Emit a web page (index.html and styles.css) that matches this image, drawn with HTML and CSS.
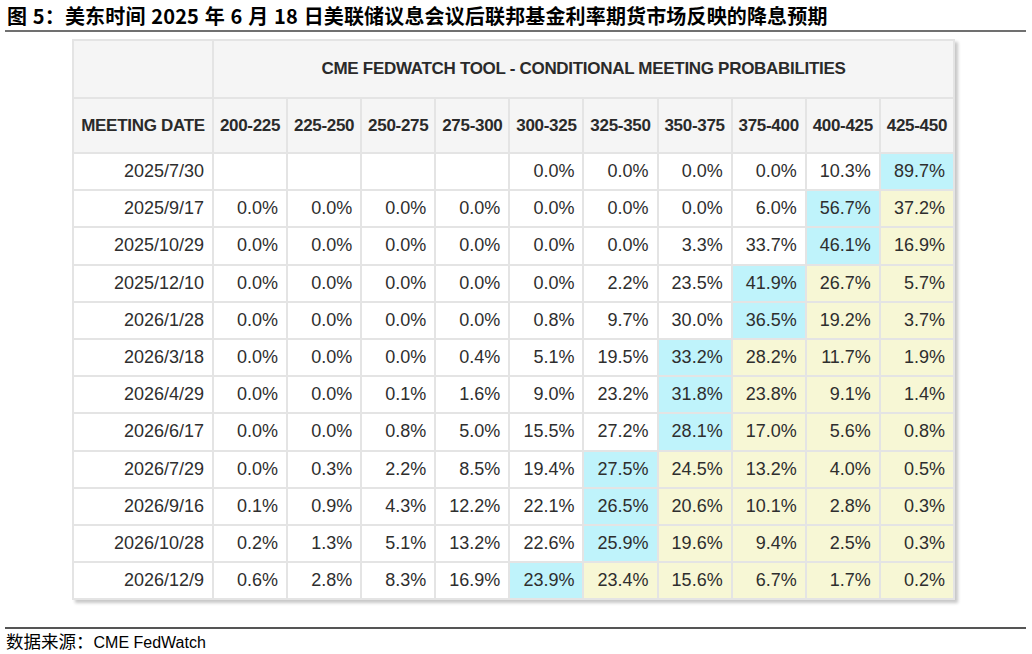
FILE: index.html
```html
<!DOCTYPE html>
<html lang="zh-CN">
<head>
<meta charset="utf-8">
<title>CME FedWatch</title>
<link rel="stylesheet" href="styles.css">
</head>
<body>
<div class="figure">
  <h1 class="fig-title">图 5：美东时间 2025 年 6 月 18 日美联储议息会议后联邦基金利率期货市场反映的降息预期</h1>
  <div class="table-wrap">
    <table class="prob">
      <colgroup>
        <col class="c-date">
        <col class="c-num"><col class="c-num"><col class="c-num"><col class="c-num"><col class="c-num">
        <col class="c-num"><col class="c-num"><col class="c-num"><col class="c-num"><col class="c-num">
      </colgroup>
      <thead>
        <tr class="h1">
          <th></th>
          <th colspan="10">CME FEDWATCH TOOL - CONDITIONAL MEETING PROBABILITIES</th>
        </tr>
        <tr class="h2">
          <th class="date-h">MEETING DATE</th>
          <th>200-225</th><th>225-250</th><th>250-275</th><th>275-300</th><th>300-325</th>
          <th>325-350</th><th>350-375</th><th>375-400</th><th>400-425</th><th>425-450</th>
        </tr>
      </thead>
      <tbody>
        <tr><td>2025/7/30</td><td></td><td></td><td></td><td></td><td>0.0%</td><td>0.0%</td><td>0.0%</td><td>0.0%</td><td>10.3%</td><td class="max">89.7%</td></tr>
        <tr><td>2025/9/17</td><td>0.0%</td><td>0.0%</td><td>0.0%</td><td>0.0%</td><td>0.0%</td><td>0.0%</td><td>0.0%</td><td>6.0%</td><td class="max">56.7%</td><td class="hi">37.2%</td></tr>
        <tr><td>2025/10/29</td><td>0.0%</td><td>0.0%</td><td>0.0%</td><td>0.0%</td><td>0.0%</td><td>0.0%</td><td>3.3%</td><td>33.7%</td><td class="max">46.1%</td><td class="hi">16.9%</td></tr>
        <tr><td>2025/12/10</td><td>0.0%</td><td>0.0%</td><td>0.0%</td><td>0.0%</td><td>0.0%</td><td>2.2%</td><td>23.5%</td><td class="max">41.9%</td><td class="hi">26.7%</td><td class="hi">5.7%</td></tr>
        <tr><td>2026/1/28</td><td>0.0%</td><td>0.0%</td><td>0.0%</td><td>0.0%</td><td>0.8%</td><td>9.7%</td><td>30.0%</td><td class="max">36.5%</td><td class="hi">19.2%</td><td class="hi">3.7%</td></tr>
        <tr><td>2026/3/18</td><td>0.0%</td><td>0.0%</td><td>0.0%</td><td>0.4%</td><td>5.1%</td><td>19.5%</td><td class="max">33.2%</td><td class="hi">28.2%</td><td class="hi">11.7%</td><td class="hi">1.9%</td></tr>
        <tr><td>2026/4/29</td><td>0.0%</td><td>0.0%</td><td>0.1%</td><td>1.6%</td><td>9.0%</td><td>23.2%</td><td class="max">31.8%</td><td class="hi">23.8%</td><td class="hi">9.1%</td><td class="hi">1.4%</td></tr>
        <tr><td>2026/6/17</td><td>0.0%</td><td>0.0%</td><td>0.8%</td><td>5.0%</td><td>15.5%</td><td>27.2%</td><td class="max">28.1%</td><td class="hi">17.0%</td><td class="hi">5.6%</td><td class="hi">0.8%</td></tr>
        <tr><td>2026/7/29</td><td>0.0%</td><td>0.3%</td><td>2.2%</td><td>8.5%</td><td>19.4%</td><td class="max">27.5%</td><td class="hi">24.5%</td><td class="hi">13.2%</td><td class="hi">4.0%</td><td class="hi">0.5%</td></tr>
        <tr><td>2026/9/16</td><td>0.1%</td><td>0.9%</td><td>4.3%</td><td>12.2%</td><td>22.1%</td><td class="max">26.5%</td><td class="hi">20.6%</td><td class="hi">10.1%</td><td class="hi">2.8%</td><td class="hi">0.3%</td></tr>
        <tr><td>2026/10/28</td><td>0.2%</td><td>1.3%</td><td>5.1%</td><td>13.2%</td><td>22.6%</td><td class="max">25.9%</td><td class="hi">19.6%</td><td class="hi">9.4%</td><td class="hi">2.5%</td><td class="hi">0.3%</td></tr>
        <tr><td>2026/12/9</td><td>0.6%</td><td>2.8%</td><td>8.3%</td><td>16.9%</td><td class="max">23.9%</td><td class="hi">23.4%</td><td class="hi">15.6%</td><td class="hi">6.7%</td><td class="hi">1.7%</td><td class="hi">0.2%</td></tr>
      </tbody>
    </table>
  </div>
  <p class="source">数据来源：<span class="src-latin">CME FedWatch</span></p>
</div>
</body>
</html>
```

FILE: styles.css
```css
html, body {
  margin: 0;
  padding: 0;
  background: #ffffff;
}

.figure {
  margin: 0 6px 0 5px;
}

.fig-title {
  margin: 0;
  padding: 2px 0 0 2px;
  height: 28px;
  line-height: 28px;
  font-family: "Noto Sans CJK SC", "Noto Sans", sans-serif;
  font-weight: 700;
  font-size: 20px;
  letter-spacing: 0.15px;
  word-spacing: 1px;
  color: #000;
  border-bottom: 2px solid #707070;
  white-space: nowrap;
}

.table-wrap {
  padding: 7px 0 0 67px;
  height: 595px;
  box-sizing: border-box;
}

.prob {
  table-layout: fixed;
  border-collapse: collapse;
  width: 881px;
  font-family: "Liberation Sans", Arial, sans-serif;
  color: #2e2e2e;
  box-shadow: 3px 3px 3px rgba(0, 0, 0, 0.22);
}

.c-date { width: 140px; }
.c-num { width: 74.1px; }

.prob th,
.prob td {
  border: 2px solid #e4e4e4;
  padding: 0;
}

.prob th {
  background: #f5f5f5;
  font-weight: 700;
  font-size: 17px;
  letter-spacing: -0.3px;
  text-align: center;
  white-space: nowrap;
  color: #2a2a2a;
}

.h1 { height: 58px; }
.h2 { height: 55px; }

.prob td {
  height: 33px;
  font-size: 18px;
  text-align: right;
  padding-right: 8px;
  background: #ffffff;
  white-space: nowrap;
}

.prob tbody tr { height: 37.2px; }

.prob td.max { background: #bff3fb; }
.prob td.hi { background: #f7f7d5; }

.source {
  margin: 0;
  border-top: 2px solid #555555;
  padding: 2px 0 0 1px;
  line-height: 20px;
  font-family: "Noto Sans CJK SC", sans-serif;
  font-size: 17.5px;
  color: #000;
}

.src-latin {
  font-family: "Liberation Sans", Arial, sans-serif;
  font-size: 16px;
}
```
